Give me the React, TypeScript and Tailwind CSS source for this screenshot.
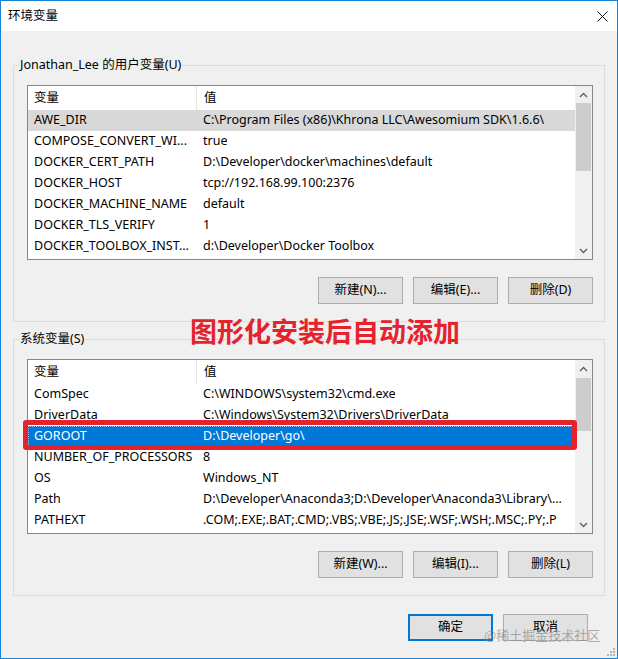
import React from "react";

const FONT = '"Noto Sans", "Noto Sans CJK SC", sans-serif';

type Row = { name: string; value: string };

const userRows: Row[] = [
  { name: "AWE_DIR", value: "C:\\Program Files (x86)\\Khrona LLC\\Awesomium SDK\\1.6.6\\" },
  { name: "COMPOSE_CONVERT_WI...", value: "true" },
  { name: "DOCKER_CERT_PATH", value: "D:\\Developer\\docker\\machines\\default" },
  { name: "DOCKER_HOST", value: "tcp://192.168.99.100:2376" },
  { name: "DOCKER_MACHINE_NAME", value: "default" },
  { name: "DOCKER_TLS_VERIFY", value: "1" },
  { name: "DOCKER_TOOLBOX_INST...", value: "d:\\Developer\\Docker Toolbox" },
];

const sysRows: Row[] = [
  { name: "ComSpec", value: "C:\\WINDOWS\\system32\\cmd.exe" },
  { name: "DriverData", value: "C:\\Windows\\System32\\Drivers\\DriverData" },
  { name: "GOROOT", value: "D:\\Developer\\go\\" },
  { name: "NUMBER_OF_PROCESSORS", value: "8" },
  { name: "OS", value: "Windows_NT" },
  { name: "Path", value: "D:\\Developer\\Anaconda3;D:\\Developer\\Anaconda3\\Library\\..." },
  { name: "PATHEXT", value: ".COM;.EXE;.BAT;.CMD;.VBS;.VBE;.JS;.JSE;.WSF;.WSH;.MSC;.PY;.P" },
];

function Chevron({ up }: { up: boolean }) {
  return (
    <svg width="9" height="6" viewBox="0 0 9 6">
      <path
        d={up ? "M1 5 L4.5 1.5 L8 5" : "M1 1 L4.5 4.5 L8 1"}
        fill="none"
        stroke="#606060"
        strokeWidth="1.4"
      />
    </svg>
  );
}

function Scrollbar({ thumbTop, thumbH }: { thumbTop: number; thumbH: number }) {
  return (
    <div className="w-[17px] shrink-0 bg-[#f0f0f0] flex flex-col">
      <div className="h-[17px] flex items-center justify-center">
        <Chevron up />
      </div>
      <div className="flex-1 flex flex-col">
        <div style={{ height: thumbTop }} />
        <div className="mx-[1px] bg-[#cdcdcd]" style={{ height: thumbH }} />
      </div>
      <div className="h-[17px] flex items-center justify-center">
        <Chevron up={false} />
      </div>
    </div>
  );
}

function List({
  rows,
  selected,
  focused,
  thumbTop,
  thumbH,
}: {
  rows: Row[];
  selected: number;
  focused: boolean;
  thumbTop: number;
  thumbH: number;
}) {
  return (
    <div className="h-[175px] border border-[#828790] bg-white flex overflow-hidden">
      <div className="flex-1 min-w-0 flex flex-col">
        <div className="h-[24px] flex shrink-0">
          <div className="w-[169px] border-r border-[#e5e5e5] pl-[6px] flex items-center">变量</div>
          <div className="flex-1 pl-[7px] flex items-center">值</div>
        </div>
        {rows.map((r, i) => {
          const sel = i === selected;
          const cls = sel
            ? focused
              ? "bg-[#0078d7] text-white outline outline-1 outline-dotted outline-[#8ec2f0] -outline-offset-1"
              : "bg-[#d9d9d9]"
            : "";
          return (
            <div key={r.name} className={`h-[21px] shrink-0 flex items-center whitespace-nowrap ${cls}`}>
              <div className="w-[169px] shrink-0 pl-[6px] overflow-hidden">{r.name}</div>
              <div className="flex-1 min-w-0 pl-[6px] overflow-hidden">{r.value}</div>
            </div>
          );
        })}
      </div>
      <Scrollbar thumbTop={thumbTop} thumbH={thumbH} />
    </div>
  );
}

function Btn({ children, primary }: { children: React.ReactNode; primary?: boolean }) {
  return (
    <div
      className={`w-[85px] h-[27px] flex items-center justify-center bg-[#e1e1e1] ${
        primary ? "border-2 border-[#0078d7]" : "border border-[#adadad]"
      }`}
    >
      {children}
    </div>
  );
}

function Group({
  label,
  children,
  buttons,
  className,
}: {
  label: string;
  children: React.ReactNode;
  buttons: string[];
  className?: string;
}) {
  return (
    <div className={`relative border border-[#dcdcdc] pt-[19px] pl-[13px] pr-[11px] pb-[17px] ${className ?? ""}`}>
      <span className="absolute left-[5px] -top-[9px] px-[1px] bg-[#f0f0f0] leading-[16px]">{label}</span>
      {children}
      <div className="flex justify-end gap-[10px] mt-[17px]">
        {buttons.map((b) => (
          <Btn key={b}>{b}</Btn>
        ))}
      </div>
    </div>
  );
}

export default function App() {
  return (
    <div
      className="relative w-[618px] h-[659px] border border-[#1883d7] bg-[#f0f0f0] flex flex-col text-[12.5px] text-black overflow-hidden"
      style={{ fontFamily: FONT }}
    >
      <div className="h-[30px] shrink-0 bg-white flex items-center justify-between pl-[7px] pr-[9px]">
        <span>环境变量</span>
        <svg width="11" height="11" viewBox="0 0 11 11">
          <path d="M0.5 0.5 L10.5 10.5 M10.5 0.5 L0.5 10.5" stroke="#111" strokeWidth="1" />
        </svg>
      </div>

      <div className="flex-1 flex flex-col px-[12px] pt-[34px]">
        <Group label="Jonathan_Lee 的用户变量(U)" buttons={["新建(N)...", "编辑(E)...", "删除(D)"]}>
          <List rows={userRows} selected={0} focused={false} thumbTop={0} thumbH={68} />
        </Group>

        <Group label="系统变量(S)" buttons={["新建(W)...", "编辑(I)...", "删除(L)"]} className="mt-[17px]">
          <List rows={sysRows} selected={2} focused thumbTop={1} thumbH={53} />
        </Group>

        <div className="flex justify-end gap-[10px] mt-[18px] pr-[17px]">
          <Btn primary>确定</Btn>
          <Btn>取消</Btn>
        </div>
      </div>

      {/* annotation overlays */}
      <div
        className="absolute left-[189px] top-[315px] text-[27px] leading-[30px] font-bold text-[#e5232c] whitespace-nowrap"
        style={{ fontFamily: '"Noto Sans CJK SC", sans-serif' }}
      >
        图形化安装后自动添加
      </div>
      <div className="absolute left-[22px] top-[419px] w-[554px] h-[30px] border-[5px] border-[#e3222c] rounded-[3px]" />

      <div
        className="absolute left-[483px] top-[625px] text-[13px] leading-[18px] text-[#8a8a8a]/70 whitespace-nowrap"
        style={{ fontFamily: '"Noto Sans CJK SC", sans-serif' }}
      >
        @稀土掘金技术社区
      </div>

      <svg className="absolute right-[2px] bottom-[2px]" width="8" height="8" viewBox="0 0 8 8">
        <rect x="6" y="0" width="2" height="2" fill="#b4b4b4" />
        <rect x="3" y="3" width="2" height="2" fill="#b4b4b4" />
        <rect x="6" y="3" width="2" height="2" fill="#b4b4b4" />
        <rect x="0" y="6" width="2" height="2" fill="#b4b4b4" />
        <rect x="3" y="6" width="2" height="2" fill="#b4b4b4" />
        <rect x="6" y="6" width="2" height="2" fill="#b4b4b4" />
      </svg>
    </div>
  );
}
